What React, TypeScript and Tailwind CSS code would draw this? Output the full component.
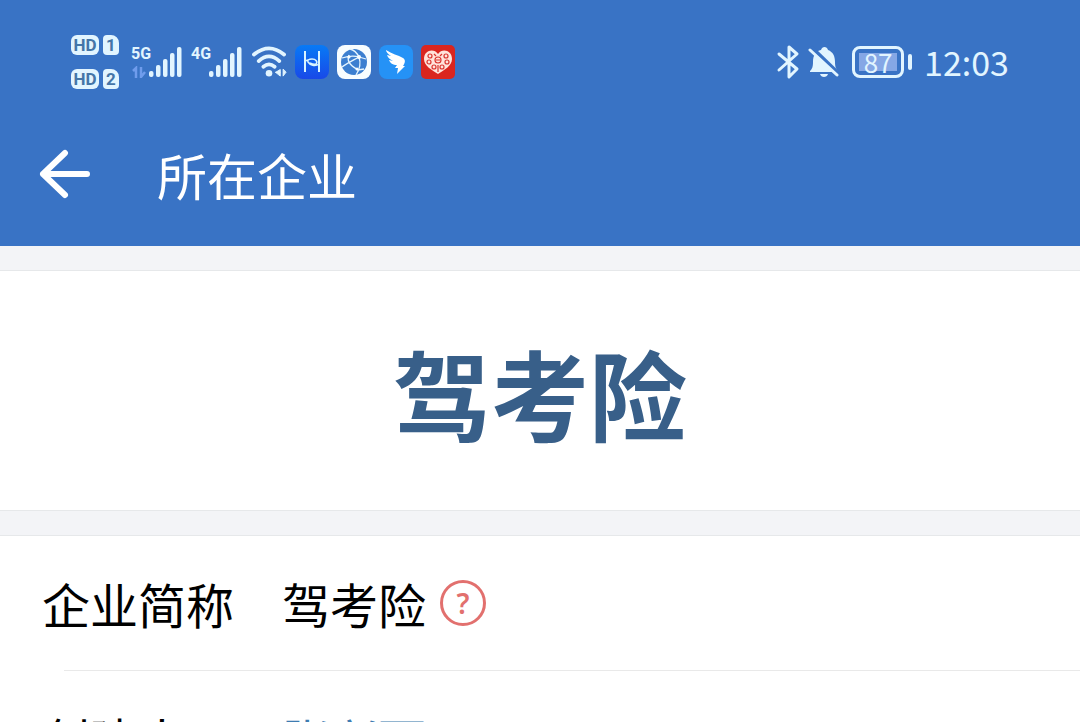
const bars = [6, 12, 18, 24, 30];

function HdBadge({ sim }: { sim: string }) {
  return (
    <div className="flex gap-1 text-[17px] leading-none font-bold text-[#4576a8]">
      <span className="flex h-5 w-7 items-center justify-center rounded-md bg-[#e2f5ff]">
        HD
      </span>
      <span className="flex h-5 w-4 items-center justify-center rounded-sm rounded-tr-lg bg-[#e2f5ff]">
        {sim}
      </span>
    </div>
  );
}

function Signal({ label, traffic }: { label: string; traffic?: boolean }) {
  return (
    <div className="flex h-8 items-end">
      <div className="flex h-8 w-4 flex-col justify-between font-['Roboto',sans-serif] text-base leading-4 font-bold">
        {label}
        {traffic && (
          <svg viewBox="0 0 14 12" className="h-3 w-4 text-[#6f9cec]" fill="none" stroke="currentColor" strokeWidth="2.5">
            <path d="M1 5l3-3v10M9 1v10l4-5" />
          </svg>
        )}
      </div>
      <svg viewBox="0 0 34 32" className="h-8 w-9" fill="currentColor">
        {bars.map((h, i) => (
          <rect key={h} x={i * 7 + 1} y={31 - h} width="4.5" height={h} rx="2" />
        ))}
      </svg>
    </div>
  );
}

function WifiIcon() {
  return (
    <svg viewBox="0 0 38 34" className="h-8 w-9" fill="none" stroke="currentColor" strokeLinecap="round">
      <path d="M3 9Q19-4 35 9" strokeWidth="4" />
      <path d="M8 16Q19 6 30 16" strokeWidth="4" />
      <path d="M13 22Q19 17 25 22" strokeWidth="4" />
      <circle cx="19" cy="29" r="3.5" fill="currentColor" stroke="none" />
      <path d="M26 28h5v-3l-5 3l5 4v-4M34 25v7l3-4z" fill="currentColor" strokeWidth="1" />
    </svg>
  );
}

function AppIcons() {
  return (
    <div className="flex gap-2">
      <svg viewBox="0 0 34 34" className="size-[34px]" fill="none" stroke="#d9f4ff" strokeWidth="2">
        <defs>
          <linearGradient id="health" x1="0" y1="0" x2="0" y2="1">
            <stop stopColor="#087af5" />
            <stop offset="1" stopColor="#1949e8" />
          </linearGradient>
        </defs>
        <rect width="34" height="34" rx="8" fill="url(#health)" stroke="none" />
        <path d="M10 6v21M24 6v21" />
        <path d="M24 19c-4 3-9 1-11-2-1-2 1-3 4-3 4 0 6 3 4 5-2 1-4 0-6-1M13 15l-3 1" strokeWidth="1.5" />
      </svg>
      <svg viewBox="0 0 34 34" className="size-[34px]" fill="none">
        <rect width="34" height="34" rx="8" fill="#f8fdff" />
        <circle cx="17" cy="17" r="13" fill="#3c7fd0" />
        <path d="M5 13c6-2 11-3 17-1M13 4c4 1 7 4 9 8M22 12c2 6 1 12-3 18M22 12l7 2M5 22c4-3 8-5 17-10M12 10c-2 5-1 9 9 15M21 25l6-1" stroke="#e5f5ff" strokeWidth="1.3" />
        <g fill="#f8fdff">
          <circle cx="12" cy="12" r="1.5" />
          <circle cx="22" cy="12" r="2" />
          <circle cx="20" cy="24" r="1.5" />
        </g>
      </svg>
      <svg viewBox="0 0 34 34" className="size-[34px]">
        <rect width="34" height="34" rx="8" fill="#2592f6" />
        <path d="M7 5c6 4 12 5 17 8 3 2 2 5 0 8h2l-8 8 1-6h-3l2-3c-4 0-7-2-8-5l4 1c-3-2-5-3-6-6l4 1C9 9 7 7 7 5z" fill="#fff" />
      </svg>
      <svg viewBox="0 0 34 34" className="size-[34px]">
        <rect width="34" height="34" rx="5" fill="#da251f" />
        <path d="M17 9C13 3 3 5 3 14c0 7 8 11 14 15 6-4 14-8 14-15 0-9-10-11-14-5z" fill="#ffe3db" />
        <g fill="none" stroke="#da352f" strokeWidth="1.2">
          <circle cx="9" cy="11" r="2" />
          <circle cx="25" cy="11" r="2" />
          <circle cx="8" cy="17" r="2" />
          <circle cx="26" cy="17" r="2" />
          <circle cx="13" cy="22" r="2" />
          <circle cx="21" cy="22" r="2" />
          <circle cx="17" cy="15" r="3" />
          <path d="M15 15h4M13 9l2 2M21 9l-2 2M17 20v7" />
        </g>
      </svg>
    </div>
  );
}

function BluetoothIcon() {
  return (
    <svg viewBox="0 0 24 36" className="h-9 w-6" fill="none" stroke="currentColor" strokeWidth="3" strokeLinejoin="round" strokeLinecap="round">
      <path d="M3 10l18 15-8 8V3l8 7L3 26" />
    </svg>
  );
}

function MutedIcon() {
  return (
    <svg viewBox="0 0 32 34" className="h-[34px] w-8" fill="currentColor">
      <path d="M2 26c2-2 3-4 3-9 0-7 3-11 8-12 1-4 6-4 7 0 5 2 7 6 7 12 0 5 1 7 3 9v1H2zM12 29h8c-1 4-7 4-8 0z" />
      <path d="M3 2l28 27" stroke="#3973c5" strokeWidth="4" />
      <path d="M2 5l27 25" stroke="currentColor" strokeWidth="3" strokeLinecap="round" />
    </svg>
  );
}

function StatusBar() {
  return (
    <div className="flex h-[124px] items-center justify-between px-[71px] text-[#e2f5ff]">
      <div className="flex items-center gap-2">
        <div className="mr-1 flex flex-col gap-[14px] font-['Roboto',sans-serif]">
          <HdBadge sim="1" />
          <HdBadge sim="2" />
        </div>
        <Signal label="5G" traffic />
        <Signal label="4G" />
        <WifiIcon />
        <AppIcons />
      </div>
      <div className="flex items-center gap-2">
        <BluetoothIcon />
        <MutedIcon />
        <div className="ml-1 flex items-center gap-1">
          <div className="flex h-8 w-[52px] rounded-lg border-3 border-current p-1">
            <span className="flex flex-1 items-center justify-center bg-[#85a7e5] text-[26px] leading-none">
              87
            </span>
          </div>
          <span className="h-4 w-1 rounded-sm bg-current" />
        </div>
        <time className="ml-1 text-[34px] leading-none">12:03</time>
      </div>
    </div>
  );
}

function Row({ label, children }: { label: string; children: React.ReactNode }) {
  return (
    <div className="flex h-[134px] shrink-0 items-center pl-[42px] text-[48px]">
      <dt className="w-60">{label}</dt>
      <dd className="flex items-center gap-[14px]">{children}</dd>
    </div>
  );
}

export default function App() {
  return (
    <div className="flex h-screen flex-col overflow-hidden bg-[#f3f4f7] font-['Noto_Sans_CJK_SC',sans-serif] leading-none text-black">
      <header className="h-[246px] shrink-0 bg-[#3973c5]">
        <StatusBar />
        <div className="flex h-[100px] items-center gap-[66px] pl-[39px] text-white">
          <button aria-label="返回">
            <svg viewBox="0 0 52 52" className="size-[52px]" fill="none" stroke="currentColor" strokeWidth="6" strokeLinecap="round" strokeLinejoin="round">
              <path d="M26 5L4 26l22 21M4 26h44" />
            </svg>
          </button>
          <h1 className="text-[50px]">所在企业</h1>
        </div>
      </header>

      <div className="mt-6 flex h-[241px] shrink-0 items-center justify-center border-y border-[#e6e8ea] bg-white">
        <h2 className="text-[98px] font-bold text-[#385f89]">驾考险</h2>
      </div>

      <dl className="mt-6 shrink-0 border-t border-[#e6e8ea] bg-white">
        <Row label="企业简称">
          驾考险
          <button aria-label="帮助" className="flex size-[46px] items-center justify-center rounded-full border-3 border-[#e2706e] font-['Noto_Sans',sans-serif] text-[28px] font-semibold text-[#e2706e]">
            ?
          </button>
        </Row>
        <div className="ml-16 h-px bg-[#e9e9e9]" />
        <Row label="创建人">
          <a href="#" className="text-[#3e7cb1]">张兴丽</a>
        </Row>
      </dl>
    </div>
  );
}
